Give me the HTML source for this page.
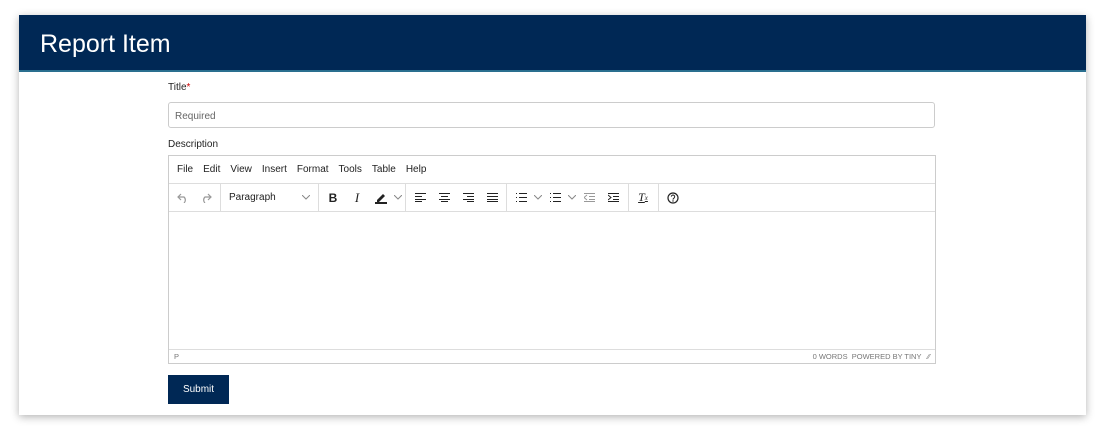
<!DOCTYPE html>
<html><head><meta charset="utf-8"><style>
body{margin:0;width:1101px;height:426px;background:#fff;font-family:"Liberation Sans",sans-serif;overflow:hidden;position:relative}
.card{position:absolute;left:19px;top:15px;width:1067px;height:400px;background:#fff;box-shadow:0 2px 8px rgba(0,0,0,.3)}
.hdr{height:57px;background:#002855;border-bottom:2px solid #2a6f8f;box-sizing:border-box;color:#fff;font-size:25px;padding:15px 0 0 21px}
.lbl{position:absolute;left:149px;font-size:10px;color:#222}
.inp{position:absolute;left:149px;top:87px;width:767px;height:26px;border:1px solid #ccc;border-radius:3px;box-sizing:border-box;font-size:10px;color:#666;padding:8px 6px}
.ed{position:absolute;left:149px;top:140px;width:768px;height:209px;border:1px solid #ccc;box-sizing:border-box}
.menu{height:27px;border-bottom:1px solid #ddd;font-size:10px;color:#222;display:flex;align-items:center;padding-left:8px}
.menu span{margin-right:10px}
.tb{height:27px;border-bottom:1px solid #ddd;display:flex;align-items:center;font-size:10px;color:#222}
.g{display:flex;align-items:center;height:27px;border-right:1px solid #ddd;padding:0 2px;box-sizing:border-box}
.g:last-child{border-right:none}
.i{width:24px;text-align:center;display:flex;justify-content:center;align-items:center}
.ch{width:10px;display:flex;justify-content:center}
.st{position:absolute;bottom:0;left:0;right:0;height:13px;border-top:1px solid #ddd;font-size:7.5px;color:#777;display:flex;align-items:center;padding:0 5px}
.btn{position:absolute;left:149px;top:360px;width:61px;height:29px;background:#002855;color:#fff;font-size:10px;text-align:center;line-height:29px}
svg{display:block}
</style></head><body>
<div class="card">
<div class="hdr">Report Item</div>
<div class="lbl" style="top:67px">Title<span style="color:#c00">*</span></div>
<div class="inp">Required</div>
<div class="lbl" style="top:124px">Description</div>
<div class="ed">
<div class="menu"><span>File</span><span>Edit</span><span>View</span><span>Insert</span><span>Format</span><span>Tools</span><span>Table</span><span>Help</span></div>
<div class="tb">
<div class="g" style="width:52px"><div class="i"><svg width="12" height="10"><path d="M4 1L1 4l3 3M1 4h6a4 4 0 010 6" fill="none" stroke="#999" stroke-width="1.2"/></svg></div><div class="i"><svg width="12" height="10"><path d="M8 1l3 3-3 3M11 4H5a4 4 0 000 6" fill="none" stroke="#999" stroke-width="1.2"/></svg></div></div>
<div class="g" style="width:98px;justify-content:space-between;padding:0 8px"><span>Paragraph</span><svg width="8" height="5"><path d="M0 0l4 4 4-4" fill="none" stroke="#888"/></svg></div>
<div class="g" style="width:87px"><div class="i" style="font-weight:bold;font-size:12px">B</div><div class="i" style="font-style:italic;font-family:'Liberation Serif';font-size:13px">I</div><div class="i"><svg width="14" height="12"><path d="M3 8l6-6 2 2-6 6H3z" fill="#222"/><rect x="1" y="10" width="12" height="2" fill="#222"/></svg></div><div class="ch"><svg width="8" height="5"><path d="M0 0l4 4 4-4" fill="none" stroke="#888"/></svg></div></div>
<div class="g" style="width:101px"><div class="i"><svg width="11" height="9"><path d="M0 .5h11M0 3.5h7M0 6.5h11M0 8.5h7" stroke="#222"/></svg></div><div class="i"><svg width="11" height="9"><path d="M0 .5h11M2 3.5h7M0 6.5h11M2 8.5h7" stroke="#222"/></svg></div><div class="i"><svg width="11" height="9"><path d="M0 .5h11M4 3.5h7M0 6.5h11M4 8.5h7" stroke="#222"/></svg></div><div class="i"><svg width="11" height="9"><path d="M0 .5h11M0 3.5h11M0 6.5h11M0 8.5h11" stroke="#222"/></svg></div></div>
<div class="g" style="width:122px"><div class="i"><svg width="11" height="9"><path d="M3 .5h8M3 4.5h8M3 8.5h8M0 .5h1M0 4.5h1M0 8.5h1" stroke="#222"/></svg></div><div class="ch"><svg width="8" height="5"><path d="M0 0l4 4 4-4" fill="none" stroke="#888"/></svg></div><div class="i"><svg width="11" height="9"><path d="M3 .5h8M3 4.5h8M3 8.5h8M0 .5h1M0 4.5h1M0 8.5h1" stroke="#222"/></svg></div><div class="ch"><svg width="8" height="5"><path d="M0 0l4 4 4-4" fill="none" stroke="#888"/></svg></div><div class="i"><svg width="11" height="9"><path d="M0 .5h11M5 3.5h6M5 6.5h6M0 8.5h11M3 2L0 4.5 3 7" stroke="#999" fill="none"/></svg></div><div class="i"><svg width="11" height="9"><path d="M0 .5h11M5 3.5h6M5 6.5h6M0 8.5h11M0 2l3 2.5L0 7" stroke="#222" fill="none"/></svg></div></div>
<div class="g" style="width:30px"><div class="i" style="font-style:italic;font-family:'Liberation Serif';font-size:12px;text-decoration:underline">T<span style="font-size:7px">x</span></div></div>
<div class="g"><div class="i"><svg width="12" height="12"><circle cx="6" cy="6" r="5" fill="none" stroke="#222" stroke-width="1.2"/><path d="M4.3 4.6a1.7 1.7 0 113 1.2c-.8.6-1.3.8-1.3 1.8" fill="none" stroke="#222"/><circle cx="6" cy="9" r=".7" fill="#222"/></svg></div></div>
</div>
<div class="st"><span>P</span><span style="margin-left:auto">0 WORDS&nbsp; POWERED BY TINY</span><span style="margin-left:6px">⁄⁄</span></div>
</div>
<div class="btn">Submit</div>
</div>
</body></html>
